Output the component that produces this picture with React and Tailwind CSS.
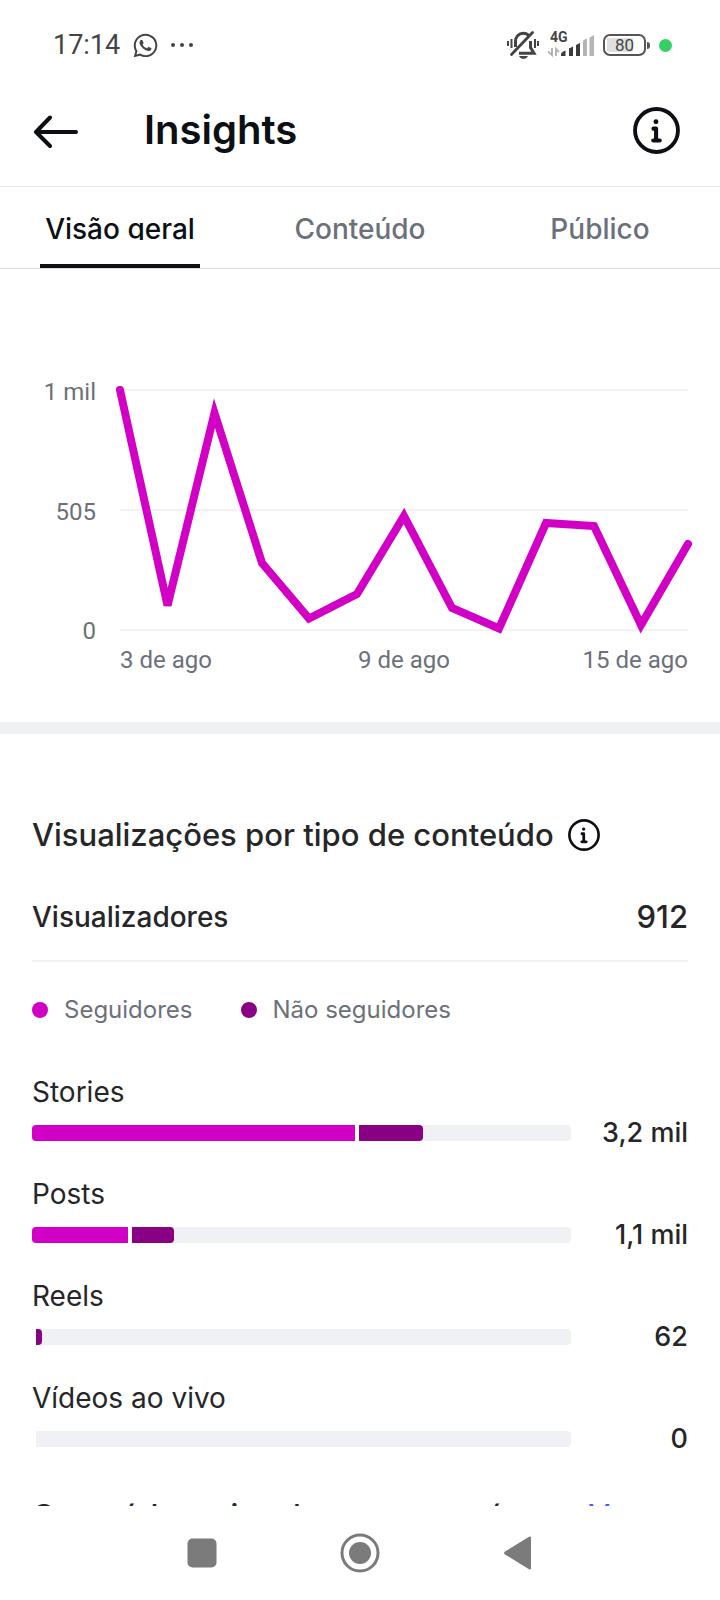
import React from 'react';
import { FaWhatsapp } from 'react-icons/fa';

const TABS = ['Visão geral', 'Conteúdo', 'Público'];

const CHART_LINE =
  '0,120 47.5,335.5 94.5,143 142,293 189,348.5 237,324 284,246 332,338 379,358.5 426,253 474,256 521,355 568,274';

const ROWS = [
  { name: 'Stories', value: '3,2 mil', followers: 60, others: 12 },
  { name: 'Posts', value: '1,1 mil', followers: 17.8, others: 7.8 },
  { name: 'Reels', value: '62', followers: 0, others: 1.2 },
  { name: 'Vídeos ao vivo', value: '0', followers: 0, others: 0 },
];

function InfoIcon({ className }) {
  return (
    <svg viewBox="0 0 46 46" fill="none" stroke="currentColor" className={className} aria-hidden="true">
      <circle cx="23" cy="23" r="21" strokeWidth="3.8" />
      <circle cx="22.5" cy="14.5" r="2.4" fill="currentColor" stroke="none" />
      <path d="M20 21.2h2.6v11.6M19.8 32.8h6.4" strokeWidth="4" strokeLinecap="round" strokeLinejoin="round" />
    </svg>
  );
}

function StatusBar() {
  return (
    <div className="flex items-center justify-between h-20 pt-2.5 pl-[53px] pr-12 shrink-0 text-[#444444] font-[Roboto,sans-serif]">
      <div className="flex items-center gap-3">
        <span className="text-[27px] leading-8">17:14</span>
        <FaWhatsapp size={27} />
        <svg viewBox="0 0 22 4" className="w-[22px] h-1" fill="currentColor" aria-hidden="true">
          <circle cx="2" cy="2" r="2" />
          <circle cx="11" cy="2" r="2" />
          <circle cx="20" cy="2" r="2" />
        </svg>
      </div>

      <div className="flex items-center gap-[9px]">
        {/* Muted bell */}
        <svg viewBox="0 0 32 28" className="w-8 h-7" fill="none" stroke="currentColor" aria-hidden="true">
          <path d="M8.5 16V10.500c0-5 3.5-8.200 7.700-8.200 2.500 0 4.500 1 6 2.800M23.500 10v6.500l3.500 5.700H12" strokeWidth="3" />
          <path d="M4.5 23.500L25.500 1.500" strokeWidth="2.800" strokeLinecap="round" />
          <path d="M12 25h9c-1 2-2.800 2.800-4.500 2.800s-3.500-.8-4.500-2.800z" fill="currentColor" stroke="none" />
          <path d="M1 10v5M4.5 8v9M28 8v9M31 10v5" strokeWidth="2" />
        </svg>
        {/* Mobile signal */}
        <div className="relative">
          <span className="absolute -top-1 left-0.5 text-[14px] leading-4 font-bold">4G</span>
          <svg viewBox="0 0 46 24" className="w-[46px] h-6" aria-hidden="true">
            <path d="M0 18.500l4 3.500v-7M8 23v-7l3 3" fill="none" stroke="#b5b5b5" strokeWidth="2" />
            <path d="M13 23v-1.500q0-2.500 4.500-4v5.500zM21 23v-7.500l4-2v9.500zM28 23v-11l4-2v13z" fill="#3c3c3c" />
            <path d="M35 23v-15.500l4-2v17.500zM41.500 23v-18.500l4.500-2.500v21z" fill="#b5b5b5" />
          </svg>
        </div>
        {/* Battery */}
        <div className="flex items-center gap-px">
          <span className="flex items-center justify-center w-[43px] h-[22px] rounded-[7px] border-2 border-[#555555] p-0.5">
            <span className="w-full h-full flex items-center justify-center bg-linear-to-r from-[#e0e0e0] from-75% to-white to-75% text-[17px] leading-5">
              80
            </span>
          </span>
          <span className="w-[3px] h-[7px] rounded-r bg-[#555555]" />
        </div>
        <span className="size-[13px] rounded-full bg-[#35d065]" />
      </div>
    </div>
  );
}

function ViewsChart() {
  return (
    <section className="pt-[120px] px-8 pb-11 font-[Roboto,sans-serif] text-2xl text-[#6b717b]">
      <div className="flex">
        <div className="w-16 -mt-[21px] -mb-6 mr-6 flex flex-col justify-between text-right leading-[48px] whitespace-nowrap">
          <span>1 mil</span>
          <span>505</span>
          <span>0</span>
        </div>
        <svg
          viewBox="0 119 568 242"
          className="flex-1 min-w-0 overflow-visible"
          role="img"
          aria-label="Visualizações por dia"
        >
          <path d="M0 120h568M0 240h568M0 360h568" stroke="#f3f3f5" strokeWidth="2" />
          <polyline points={CHART_LINE} fill="none" stroke="#d100c4" strokeWidth="8" strokeLinecap="round" />
        </svg>
      </div>
      <div className="grid grid-cols-3 pl-[88px] mt-[11px] leading-9">
        <span>3 de ago</span>
        <span className="text-center">9 de ago</span>
        <span className="text-right">15 de ago</span>
      </div>
    </section>
  );
}

function ContentRow({ row }) {
  const hasFollowers = row.followers > 0;

  return (
    <li>
      <p className="text-[28px] leading-9">{row.name}</p>
      <div className="flex items-center mt-2">
        <div className="flex flex-1 h-4">
          <div
            className={`mr-1 ${hasFollowers ? 'rounded-l bg-[#d100c4]' : ''}`}
            style={{ width: `${row.followers}%` }}
          />
          <div className="flex-1 flex rounded-r bg-[#f0f1f5]">
            {row.others > 0 && (
              <div
                className="rounded-r bg-[#8a0084]"
                style={{ width: `${(row.others * 100) / (100 - row.followers)}%` }}
              />
            )}
          </div>
        </div>
        <span className="w-[117px] text-right text-[27px] font-medium leading-[30px]">{row.value}</span>
      </div>
    </li>
  );
}

export default function App() {
  return (
    <div className="flex flex-col h-screen overflow-hidden bg-white text-[#262628] font-[Inter,sans-serif]">
      <StatusBar />

      <header className="flex items-center h-[107px] shrink-0 px-8 pb-1.5 border-b border-[#e6e6e8] text-[#0c1014]">
        <button aria-label="Voltar">
          <svg viewBox="0 0 46 34" className="w-[46px] mt-1" fill="none" stroke="currentColor" strokeWidth="4" strokeLinecap="round" strokeLinejoin="round" aria-hidden="true">
            <path d="M44 17H4M18 2.5L4 17l14 14" />
          </svg>
        </button>
        <h1 className="flex-1 ml-[66px] text-[40px] font-semibold">Insights</h1>
        <button aria-label="Informações" className="mr-2">
          <InfoIcon className="size-[47px]" />
        </button>
      </header>

      <nav className="grid grid-cols-3 shrink-0 h-[82px] border-b border-[#dcdce0] text-[28px] font-medium" role="tablist">
        {TABS.map((tab, i) => (
          <button
            key={tab}
            role="tab"
            aria-selected={i === 0}
            className={`mx-10 pt-6 flex justify-center items-start border-b-4 whitespace-nowrap ${
              i === 0 ? 'border-[#0c1014] text-[#0c1014]' : 'border-transparent text-[#6b717b]'
            }`}
          >
            <span className={`leading-9 ${i === 0 ? 'h-[29px] overflow-hidden' : ''}`}>{tab}</span>
          </button>
        ))}
      </nav>

      <main className="flex-1 min-h-0 overflow-hidden">
        <ViewsChart />
        <div className="h-3 bg-[#f0f1f5]" />

        <section className="px-8 pt-[81px]">
          <div className="flex items-center gap-3.5">
            <h2 className="text-[31px] leading-10 font-medium">Visualizações por tipo de conteúdo</h2>
            <button aria-label="Sobre as visualizações" className="text-[#0c1014]">
              <InfoIcon className="size-8" />
            </button>
          </div>

          <div className="flex items-center justify-between pt-[41px] pb-[22px] border-b-2 border-[#f0f1f5] font-medium">
            <span className="text-[28px]">Visualizadores</span>
            <span className="text-[31px] leading-10">912</span>
          </div>

          <div className="flex gap-12 mt-[30px] text-2xl leading-9 text-[#6b717b]">
            <span className="flex items-center gap-4">
              <span className="size-4 rounded-full bg-[#d100c4]" />
              Seguidores
            </span>
            <span className="flex items-center gap-4">
              <span className="size-4 rounded-full bg-[#8a0084]" />
              Não seguidores
            </span>
          </div>

          <ul className="flex flex-col gap-7 mt-[46px]">
            {ROWS.map((row) => (
              <ContentRow key={row.name} row={row} />
            ))}
          </ul>

          <div className="flex mt-[42px] gap-2 text-[31px] leading-10 font-medium whitespace-nowrap">
            <h2>Conteúdo mais relevante por número</h2>
            <a href="#ver" className="text-[#4a5df0]">Ver</a>
          </div>
        </section>
      </main>

      <footer className="flex items-center justify-center gap-[118px] h-[94px] shrink-0 bg-white text-[#7b7b7b]">
        <button aria-label="Recentes">
          <svg viewBox="0 0 40 40" className="size-10" fill="currentColor" aria-hidden="true">
            <rect x="5.5" y="5.5" width="29" height="29" rx="5" />
          </svg>
        </button>
        <button aria-label="Início">
          <svg viewBox="0 0 40 40" className="size-10" fill="currentColor" aria-hidden="true">
            <circle cx="20" cy="20" r="18" fill="none" stroke="currentColor" strokeWidth="3" />
            <circle cx="20" cy="20" r="11" />
          </svg>
        </button>
        <button aria-label="Voltar ao aplicativo anterior">
          <svg viewBox="0 0 40 40" className="size-10" fill="currentColor" aria-hidden="true">
            <path d="M7 18.5L31 3.8q2-1 2 1v30.4q0 2-2 1L7 21.5q-2-1.500 0-3z" />
          </svg>
        </button>
      </footer>
    </div>
  );
}
